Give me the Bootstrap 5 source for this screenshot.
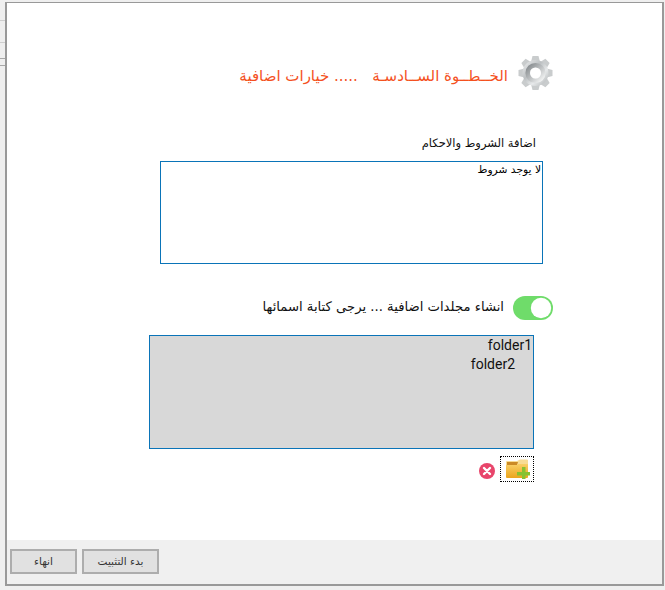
<!DOCTYPE html>
<html lang="ar" dir="rtl">
<head>
    <meta charset="UTF-8">
    <meta name="viewport" content="width=device-width, initial-scale=1.0">
    <title>Setup</title>
    <link rel="stylesheet" href="https://cdn.jsdelivr.net/npm/bootstrap@5.3.0/dist/css/bootstrap.min.css">
    <script src="https://cdn.jsdelivr.net/npm/bootstrap@5.3.0/dist/js/bootstrap.bundle.min.js"></script>
    <style>
        html, body { height: 590px; overflow: hidden; }
        body {
            font-family: "DejaVu Sans", "Liberation Sans", sans-serif;
            padding: 2px 1px 4px 5px;
            background:
                linear-gradient(#cfcfcf, #cfcfcf) 0 20px / 5px 1px no-repeat,
                linear-gradient(#cfcfcf, #cfcfcf) 0 42px / 5px 1px no-repeat,
                linear-gradient(#a8a8a8, #a8a8a8) 0 58px / 5px 1px no-repeat,
                linear-gradient(#a8a8a8, #a8a8a8) 0 65px / 5px 1px no-repeat,
                #efefef;
        }
        .setup-win {
            height: 584px;
            width: 659px;
            background: #fff;
            border: solid #999;
            border-width: 1px 2px 2px 2px;
        }
        .setup-main { padding-right: 109px; padding-top: 52px; }
        .step-title { color: #f4511e; font-size: 15px; gap: 10px; height: 36px; }
        .step-title span { margin-top: 7px; }
        .terms-label { font-size: 11.5px; margin-top: 44px; margin-right: 17px; color: #111; line-height: 16px; }
        .terms-box {
            width: 383px; height: 103px; margin-top: 10px; margin-right: 10px;
            border: 1px solid #0a74b8; border-radius: 0; padding: 0 1px; font-size: 10.7px; color: #000;
            resize: none; box-shadow: none;
        }
        .folder-toggle { margin-top: 32px; gap: 9px; font-size: 13.2px; color: #111; height: 24px; }
        .folder-toggle span { padding-bottom: 2px; }
        .form-switch { padding: 0; margin: 0; min-height: 0; line-height: 0; }
        .form-switch .form-check-input {
            width: 40px; height: 24px; margin: 0; float: none;
            background-color: #6fdc6a; border: 0;
            background-image: url("data:image/svg+xml,%3csvg xmlns='http://www.w3.org/2000/svg' viewBox='-4 -4 8 8'%3e%3ccircle r='3.4' fill='%23fff'/%3e%3c/svg%3e");
        }
        .folder-box {
            width: 385px; height: 114px; margin-top: 15px; margin-right: 19px;
            background: #d8d8d8; border: 1px solid #0a74b8;
            font-family: Roboto, sans-serif; font-size: 14px; line-height: 19px; color: #111;
            padding-right: 1px;
        }
        .folder-box .sub-name { padding-right: 17px; }
        .folder-tools { margin-top: 7px; margin-right: 19px; gap: 5px; height: 26px; }
        .add-folder { width: 34px; height: 26px; border: 1px dotted #000; padding: 0; background: #fff; border-radius: 0; }
        .del-folder { padding: 0; border: 0; background: none; line-height: 0; margin-top: 4px; }
        .setup-foot { background: #f0f0f0; height: 44px; padding: 9px 0 0 3px; gap: 5px; }
        .setup-foot .btn {
            height: 25px; padding: 0; font-size: 10.5px; color: #333; line-height: 21px;
            background: #e1e1e1; border: 2px solid #adadad; border-radius: 0;
        }
        .btn-finish { width: 67px; }
        .btn-install { width: 77px; }
    </style>
</head>
<body>
    <div class="setup-win d-flex flex-column">
        <div class="setup-main flex-grow-1">
            <div class="step-title d-flex align-items-center">
                <svg width="35" height="36" viewBox="-17.5 -18 35 36">
                    <defs>
                        <linearGradient id="steel" x1="0" y1="0" x2="1" y2="1">
                            <stop offset="0" stop-color="#f0f1f2"/>
                            <stop offset=".4" stop-color="#bcc0c2"/>
                            <stop offset=".65" stop-color="#e8eaeb"/>
                            <stop offset="1" stop-color="#a8acae"/>
                        </linearGradient>
                        <linearGradient id="ring" x1="0" y1="0" x2="1" y2="1">
                            <stop offset="0" stop-color="#858a8d"/>
                            <stop offset="1" stop-color="#f6f7f7"/>
                        </linearGradient>
                    </defs>
                    <g fill="#c9cccd">
                        <polygon points="-4.500,-11 -3,-17 3,-17 4.500,-11"/>
                        <polygon points="-4.500,-11 -3,-17 3,-17 4.500,-11" transform="rotate(45)"/>
                        <polygon points="-4.500,-11 -3,-17 3,-17 4.500,-11" transform="rotate(90)"/>
                        <polygon points="-4.500,-11 -3,-17 3,-17 4.500,-11" transform="rotate(135)"/>
                        <polygon points="-4.500,-11 -3,-17 3,-17 4.500,-11" transform="rotate(180)"/>
                        <polygon points="-4.500,-11 -3,-17 3,-17 4.500,-11" transform="rotate(225)"/>
                        <polygon points="-4.500,-11 -3,-17 3,-17 4.500,-11" transform="rotate(270)"/>
                        <polygon points="-4.500,-11 -3,-17 3,-17 4.500,-11" transform="rotate(315)"/>
                    </g>
                    <circle r="13" fill="url(#steel)"/>
                    <circle r="7.800" fill="none" stroke="url(#ring)" stroke-width="4.600"/>
                    <circle r="5.500" fill="#fff"/>
                </svg>
                <span>الخــطــوة الســادسـة &nbsp; ..... خيارات اضافية</span>
            </div>
            <div class="terms-label">اضافة الشروط والاحكام</div>
            <textarea class="form-control terms-box">لا يوجد شروط</textarea>
            <div class="folder-toggle d-flex align-items-center">
                <div class="form-check form-switch">
                    <input class="form-check-input" type="checkbox" role="switch" checked>
                </div>
                <span>انشاء مجلدات اضافية ... يرجى كتابة اسمائها</span>
            </div>
            <div class="folder-box">
                <div>folder1</div>
                <div class="sub-name">folder2</div>
            </div>
            <div class="folder-tools d-flex align-items-center">
                <button class="btn add-folder d-flex align-items-center justify-content-center" type="button">
                    <svg width="26" height="20" viewBox="0 0 26 20">
                        <defs>
                            <linearGradient id="folderFront" x1="0" y1="0" x2="0" y2="1">
                                <stop offset="0" stop-color="#f9cf66"/>
                                <stop offset="1" stop-color="#eba51d"/>
                            </linearGradient>
                        </defs>
                        <path d="M2 3a1 1 0 0 1 1-1h10l3-1.500h7a1 1 0 0 1 1 1V18H2z" fill="#f8dc94"/>
                        <path d="M3 3h11l-1 3H3z" fill="#cb8a26"/>
                        <path d="M2 6h11l1-1h10v13a1 1 0 0 1-1 1H3a1 1 0 0 1-1-1z" fill="url(#folderFront)"/>
                        <path d="M18 8h3.500v5h4.500v3.500h-4.500V20H18v-3.500h-5V13h5z" fill="#86c232"/>
                    </svg>
                </button>
                <button class="btn del-folder" type="button">
                    <svg width="16" height="16" viewBox="0 0 16 16">
                        <circle cx="8" cy="8" r="8" fill="#e8456b"/>
                        <path d="M5 5l6 6M11 5l-6 6" stroke="#fff" stroke-width="2.400" stroke-linecap="round"/>
                    </svg>
                </button>
            </div>
        </div>
        <div class="setup-foot d-flex justify-content-end">
            <button class="btn btn-install" type="button">بدء التثبيت</button>
            <button class="btn btn-finish" type="button">انهاء</button>
        </div>
    </div>
</body>
</html>
